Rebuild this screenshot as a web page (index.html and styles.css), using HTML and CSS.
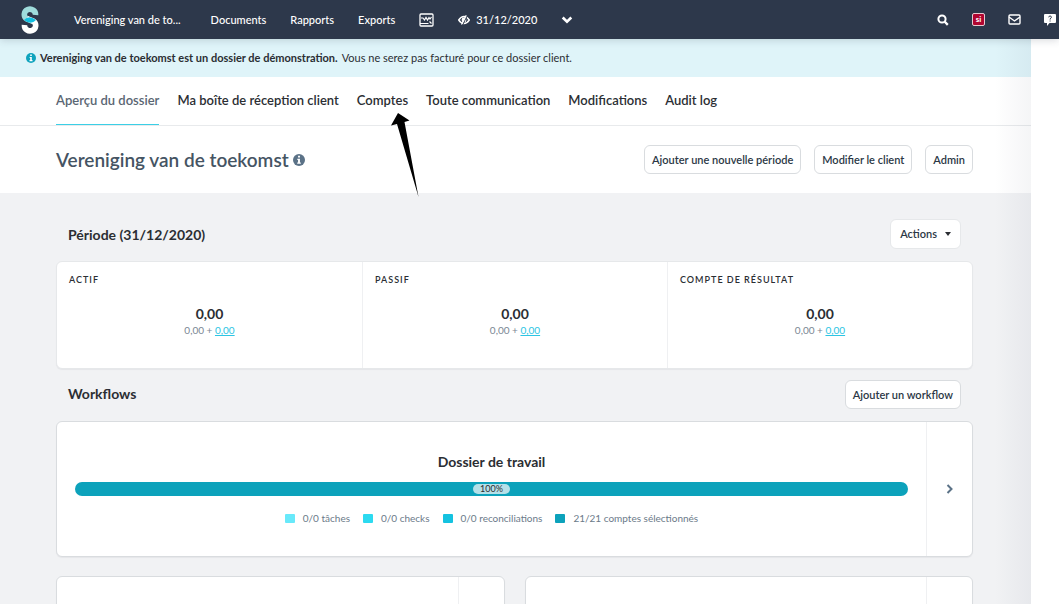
FILE: index.html
```html
<!DOCTYPE html>
<html lang="fr">
<head>
    <meta charset="UTF-8">
    <meta name="viewport" content="width=device-width, initial-scale=1.0">
    <title>Vereniging van de toekomst</title>
    <link rel="stylesheet" href="styles.css">
</head>
<body>
    <header class="topbar">
        <a href="#" class="logo" aria-label="Accueil">
            <svg width="18" height="28" viewBox="0 0 18 28">
                <path d="M14.500 9A5.600 5.400 0 1 0 5.500 12.800L12 15.500" fill="none" stroke="#9fdcdc" stroke-width="5.600"/>
                <path d="M3.500 19A5.600 5.400 0 1 0 12.500 15.200L6 12.500" fill="none" stroke="#fff" stroke-width="5.600"/>
                <path d="M3 14Q8 8.500 15 14Q10 19.500 3 14Z" fill="#12bfe0"/>
            </svg>
        </a>
        <nav class="main-nav">
            <a href="#" class="client">Vereniging van de to...</a>
            <a href="#">Documents</a>
            <a href="#">Rapports</a>
            <a href="#">Exports</a>
            <a href="#" class="icon" aria-label="Activité">
                <svg width="15" height="14" viewBox="0 0 15 14" fill="none" stroke="#fff" stroke-width="1.300">
                    <rect x="1" y="1" width="13" height="12" rx="1"/>
                    <path d="M2 5h2l1.500 2L7 4.500l1.500 2.500L10 4.500l1 1.500 1.500-2M1 10.500h8.500M10.500 8.500l2 2" stroke-width="1.200"/>
                </svg>
            </a>
            <a href="#" class="date">
                <svg width="12" height="10" viewBox="0 0 12 10" fill="none" stroke="#fff">
                    <path d="M.7 5Q3 1.500 6 1.500T11.300 5Q9 8.500 6 8.500T.7 5Z" stroke-width="1.400"/>
                    <circle cx="6" cy="5" r="2.400" fill="#fff" stroke="none"/>
                    <path d="M4.700 9.800L9.300 .5" stroke="#2d384b" stroke-width="1"/>
                    <path d="M3.500 9.500L8.200 .3" stroke-width="1.200"/>
                </svg>
                31/12/2020
            </a>
            <button type="button" class="icon" aria-label="Périodes">
                <svg width="12" height="8" viewBox="0 0 12 8"><path d="M1.700 1.500L6 5.700l4.300-4.200" fill="none" stroke="#fff" stroke-width="2.600"/></svg>
            </button>
        </nav>
        <div class="tools">
            <button type="button" class="icon" aria-label="Rechercher">
                <svg width="12" height="12" viewBox="0 0 12 12" fill="none" stroke="#fff">
                    <circle cx="5" cy="5" r="3.600" stroke-width="2"/>
                    <path d="M7.500 7.500l3.300 3.300" stroke-width="2.400"/>
                </svg>
            </button>
            <a href="#" class="si-badge">si</a>
            <button type="button" class="icon" aria-label="Messages">
                <svg width="13" height="11" viewBox="0 0 13 11" fill="none" stroke="#fff" stroke-width="1.400">
                    <rect x="1" y="1" width="11" height="9" rx="1"/>
                    <path d="M1 3l5.500 4L12 3"/>
                </svg>
            </button>
            <button type="button" class="icon" aria-label="Aide">
                <svg width="12" height="12" viewBox="0 0 12 12">
                    <path d="M1 0h10q1 0 1 1v7q0 1-1 1H5.500L3 12V9H1Q0 9 0 8V1Q0 0 1 0Z" fill="#fff"/>
                    <path d="M4.700 3.300Q4.800 2 6.100 2T7.400 3.300Q7.400 4 6.100 4.800V5.600M6.100 6.500v1" fill="none" stroke="#2d384b" stroke-width="1"/>
                </svg>
            </button>
        </div>
    </header>

    <div class="page">
        <div class="banner">
            <svg width="10" height="10" viewBox="0 0 10 10">
                <circle cx="5" cy="5" r="5" fill="#0fa3bd"/>
                <path d="M4.200 1.500h1.600v1.400H4.200zM3.600 4h2.200v3h.7v1.200H3.500V7h.7V5.100h-.6z" fill="#fff"/>
            </svg>
            <strong>Vereniging van de toekomst est un dossier de démonstration.</strong>
            <span>Vous ne serez pas facturé pour ce dossier client.</span>
        </div>

        <nav class="tabs">
            <a href="#" class="active">Aperçu du dossier</a>
            <a href="#">Ma boîte de réception client</a>
            <a href="#" class="pointed">Comptes
                <svg class="pointer" width="30" height="86" viewBox="0 0 30 86">
                    <path d="M8 0L19.500 7.500L14.500 9L28.500 84L7 11L1 12.500Z" fill="#000"/>
                </svg>
            </a>
            <a href="#">Toute communication</a>
            <a href="#">Modifications</a>
            <a href="#">Audit log</a>
        </nav>

        <div class="title-row">
            <h1>Vereniging van de toekomst
                <svg width="12" height="12" viewBox="0 0 10 10">
                    <circle cx="5" cy="5" r="5" fill="#5b7287"/>
                    <path d="M4.200 1.500h1.600v1.400H4.200zM3.600 4h2.200v3h.7v1.200H3.500V7h.7V5.100h-.6z" fill="#fff"/>
                </svg>
            </h1>
            <div class="buttons">
                <button type="button" class="btn">Ajouter une nouvelle période</button>
                <button type="button" class="btn">Modifier le client</button>
                <button type="button" class="btn">Admin</button>
            </div>
        </div>

        <main class="content">
            <div class="section-head period-head">
                <h2>Période (31/12/2020)</h2>
                <button type="button" class="btn actions">Actions <span class="caret"></span></button>
            </div>
            <section class="card totals">
                <div class="total">
                    <h3>Actif</h3>
                    <p class="amount">0,00</p>
                    <p class="detail">0,00 + <a href="#">0,00</a></p>
                </div>
                <div class="total">
                    <h3>Passif</h3>
                    <p class="amount">0,00</p>
                    <p class="detail">0,00 + <a href="#">0,00</a></p>
                </div>
                <div class="total">
                    <h3>Compte de résultat</h3>
                    <p class="amount">0,00</p>
                    <p class="detail">0,00 + <a href="#">0,00</a></p>
                </div>
            </section>

            <div class="section-head">
                <h2>Workflows</h2>
                <button type="button" class="btn">Ajouter un workflow</button>
            </div>
            <section class="card workflow">
                <div class="workflow-body">
                    <h2>Dossier de travail</h2>
                    <div class="progress"><span>100%</span></div>
                    <ul class="legend">
                        <li class="tasks">0/0 tâches</li>
                        <li class="checks">0/0 checks</li>
                        <li class="reconciliations">0/0 reconciliations</li>
                        <li class="accounts">21/21 comptes sélectionnés</li>
                    </ul>
                </div>
                <a href="#" class="open" aria-label="Ouvrir">
                    <svg width="8" height="10" viewBox="0 0 8 10"><path d="M1.500 1l4 4-4 4" fill="none" stroke="#5b7287" stroke-width="2"/></svg>
                </a>
            </section>

            <div class="workflow-grid">
                <section class="card workflow">
                    <div class="workflow-body"></div>
                    <div class="open"></div>
                </section>
                <section class="card workflow">
                    <div class="workflow-body"></div>
                    <div class="open"></div>
                </section>
            </div>
        </main>
    </div>
</body>
</html>
```

FILE: styles.css
```css
* {
    box-sizing: border-box;
}

body {
    margin: 0;
    height: 100vh;
    overflow: hidden;
    display: flex;
    flex-direction: column;
    font-family: Lato, "Liberation Sans", sans-serif;
    font-size: 11px;
    line-height: 16px;
    color: #2b2e33;
    background: #fff;
}

h1, h2, h3, p, ul {
    margin: 0;
    padding: 0;
}

a {
    color: inherit;
    text-decoration: none;
}

button {
    font: inherit;
    color: inherit;
    cursor: pointer;
}

svg {
    display: block;
    flex: none;
}

/* Top bar */
.topbar {
    flex: none;
    display: flex;
    align-items: center;
    height: 39px;
    padding: 0 3px 0 21px;
    background: #2d384b;
    color: #fff;
    box-shadow: 0 1px 8px rgba(45, 56, 75, 0.2);
    position: relative;
    z-index: 1;
}

.main-nav {
    display: flex;
    align-items: center;
    gap: 24px;
    margin-left: 35px;
    font-weight: 500;
}

.main-nav .client {
    margin-right: 6px;
}

.date {
    display: flex;
    align-items: center;
    gap: 6px;
}

.icon {
    padding: 0;
    border: 0;
    background: none;
}

.tools {
    display: flex;
    align-items: center;
    gap: 23px;
    margin-left: auto;
}

.si-badge {
    width: 13px;
    height: 13px;
    border: 1px solid #e8c9d0;
    border-radius: 2px;
    background: #b00530;
    font-size: 8px;
    font-weight: bold;
    line-height: 11px;
    text-align: center;
}

/* Page */
.page {
    flex: 1;
    min-height: 0;
    margin-right: 28px;
    overflow: hidden;
    position: relative;
}

.page::after {
    content: "";
    position: absolute;
    top: 0;
    right: 0;
    bottom: 0;
    width: 36px;
    background: linear-gradient(to right, rgba(45, 56, 90, 0), rgba(45, 56, 90, 0.05));
    pointer-events: none;
}

.banner {
    display: flex;
    align-items: center;
    gap: 4px;
    height: 38px;
    padding: 0 26px;
    background: #dff4f9;
}

.tabs {
    display: flex;
    gap: 18px;
    height: 49px;
    padding: 0 56px;
    border-bottom: 1px solid #e8eaec;
    font-size: 13px;
    font-weight: 600;
    line-height: 46px;
}

.tabs .active {
    color: #5a6673;
    border-bottom: 1px solid #3bcfe6;
}

.pointed {
    position: relative;
}

.pointer {
    position: absolute;
    top: 36px;
    left: 33px;
    z-index: 2;
}

.title-row {
    display: flex;
    align-items: center;
    justify-content: space-between;
    height: 67px;
    padding: 0 58px 0 56px;
}

h1 {
    display: flex;
    align-items: center;
    gap: 4px;
    font-size: 19px;
    font-weight: 600;
    line-height: 24px;
    color: #455463;
}

.buttons {
    display: flex;
    gap: 13px;
}

.btn {
    padding: 5px 7px;
    border: 1px solid #d9dcdf;
    border-radius: 6px;
    background: #fff;
    font-weight: 600;
    line-height: 17px;
    color: #2b3745;
}

/* Content */
.content {
    padding: 20px 58px 20px 56px;
    background: #f1f2f4;
}

.section-head {
    display: flex;
    align-items: center;
    justify-content: space-between;
    height: 52px;
    padding: 0 12px 2px;
}

.period-head {
    align-items: flex-start;
    height: 48px;
    padding-top: 6px;
}

h2 {
    font-size: 14px;
    font-weight: bold;
    line-height: 20px;
}

.period-head h2 {
    line-height: 32px;
}

.actions {
    display: flex;
    align-items: center;
    gap: 8px;
    padding: 5px 9px;
    border-color: #e6e8ea;
    line-height: 18px;
}

.caret {
    border: 3px solid transparent;
    border-top: 4px solid #2b2e33;
    border-bottom: 0;
}

.card {
    border: 1px solid #d9dcdf;
    border-radius: 6px;
    background: #fff;
    box-shadow: 0 1px 1px rgba(45, 56, 75, 0.06);
}

.totals {
    display: grid;
    grid-template-columns: repeat(3, 1fr);
    height: 108px;
    border-color: #e6e8ea;
}

.total {
    padding: 10px 12px;
    border-left: 1px solid #eff0f2;
    text-align: center;
}

.total:first-child {
    border-left: 0;
}

h3 {
    font-size: 9px;
    font-weight: 600;
    line-height: 16px;
    letter-spacing: 1px;
    text-align: left;
    text-transform: uppercase;
}

.amount {
    margin-top: 17px;
    font-size: 14px;
    font-weight: bold;
    line-height: 18px;
}

.detail {
    font-size: 10px;
    line-height: 14px;
    color: #7b8794;
}

.detail a {
    color: #2cc5e3;
    text-decoration: underline;
}

.workflow {
    display: flex;
    height: 136px;
}

.workflow-body {
    flex: 1;
    padding: 30px 18px 0;
    text-align: center;
}

.open {
    display: flex;
    align-items: center;
    justify-content: center;
    width: 46px;
    border-left: 1px solid #eff0f2;
}

.progress {
    display: flex;
    align-items: center;
    justify-content: center;
    height: 14px;
    margin-top: 10px;
    border-radius: 7px;
    background: #0ca2bb;
}

.progress span {
    padding: 0 7px;
    border-radius: 5px;
    background: #b5e0e8;
    font-size: 9px;
    line-height: 10px;
}

.legend {
    display: flex;
    justify-content: center;
    gap: 13px;
    margin-top: 14px;
    list-style: none;
    font-size: 10px;
    color: #6b7a89;
}

.legend li {
    display: flex;
    align-items: center;
    gap: 8px;
}

.legend li::before {
    content: "";
    width: 10px;
    height: 9px;
    border-radius: 1px;
    background: #0ca2bb;
}

.legend .tasks::before {
    background: #68e9fa;
}

.legend .checks::before {
    background: #2cdaf0;
}

.legend .reconciliations::before {
    background: #14c2e0;
}

.workflow-grid {
    display: grid;
    grid-template-columns: 1fr 1fr;
    gap: 20px;
    margin-top: 19px;
}
```
